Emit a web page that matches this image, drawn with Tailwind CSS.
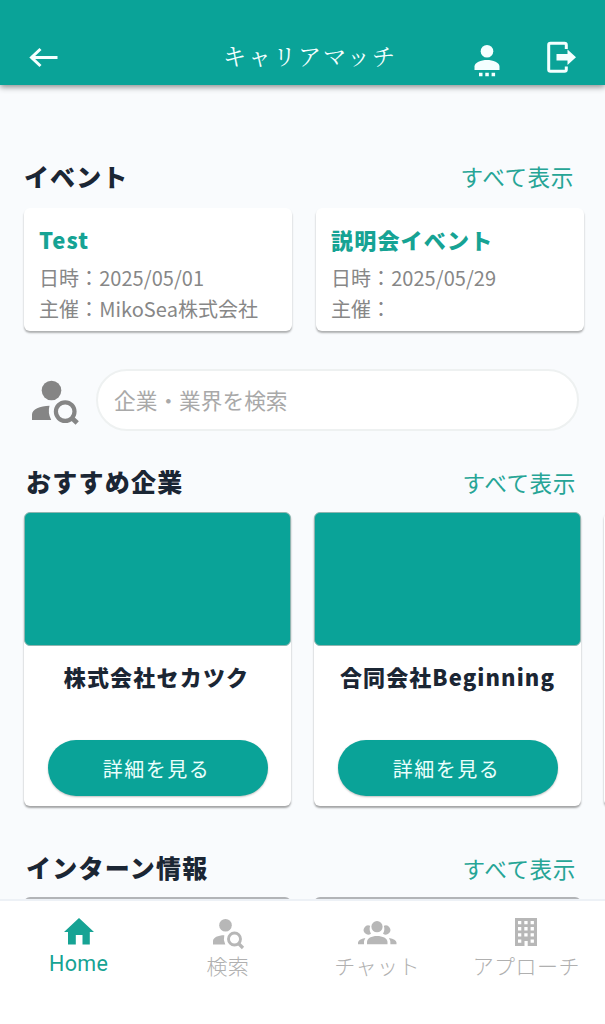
<!DOCTYPE html>
<html lang="ja">
<head>
    <meta charset="UTF-8">
    <meta name="viewport" content="width=device-width, initial-scale=1.0">
    <title>キャリアマッチ</title>
    <script src="https://cdn.jsdelivr.net/npm/@tailwindcss/browser@4"></script>
</head>
<body class="w-[605px] h-[1024px] flex flex-col overflow-hidden bg-[#f9fbfd] font-['Noto_Sans_CJK_JP',sans-serif] text-[#1b2634]">

    <!-- Header -->
    <header class="relative z-10 h-[85px] shrink-0 bg-[#0aa398] shadow-[0_2px_6px_rgba(0,0,0,0.45)] flex items-start pl-[28px] pt-[36px] text-[#f4ffff]">
        <svg class="w-8 h-11 shrink-0" viewBox="0 0 32 44" fill="none" stroke="currentColor" stroke-width="3">
            <path d="M29.500 21.500H4M12.500 13L3.500 21.500L12.500 30"/>
        </svg>
        <h1 class="ml-[163px] w-[176px] h-10 shrink-0 leading-[40px] text-[23px] tracking-[2px] font-normal whitespace-nowrap font-['Noto_Serif_CJK_JP','Noto_Sans_CJK_JP',serif]">キャリアマッチ</h1>
        <svg class="ml-[72px] w-8 h-11 shrink-0" viewBox="0 0 32 44" fill="currentColor">
            <circle cx="16" cy="15.300" r="6.300"/>
            <path d="M3.500 34V30.500C3.500 26.500 10 24 16 24S28.500 26.500 28.500 30.500V34Z"/>
            <path d="M8 36.700h3.500v3.500H8zM14.300 36.700h3.500v3.500h-3.500zM20.600 36.700h3.500v3.500h-3.500z"/>
        </svg>
        <svg class="ml-[42px] w-9 h-11 shrink-0" viewBox="0 0 36 44" fill="none">
            <path d="M21.300 13V9Q21.300 7.200 19.500 7.200H5.500Q3.700 7.200 3.700 9V33.500Q3.700 35.300 5.500 35.300H19.500Q21.300 35.300 21.300 33.500V30.500" stroke="currentColor" stroke-width="3"/>
            <path d="M11.500 18H22.500V13.500L31 21.300L22.500 29V24.500H11.500Z" fill="currentColor"/>
        </svg>
    </header>

    <!-- Contenido -->
    <main class="flex-1 min-h-0 overflow-hidden pl-[24px] pt-[73px]">
        <section>
            <div class="flex justify-between h-9 leading-9 pr-[31px]">
                <h2 class="text-[25px] font-black tracking-[1.100px]">イベント</h2>
                <a href="#" class="pt-px text-[22.600px] tracking-[0.600px] text-[#26a596]">すべて表示</a>
            </div>
            <div class="flex gap-6 mt-[14px]">
                <div class="w-[268px] h-[123px] shrink-0 bg-white rounded-md shadow-[0_2px_2px_rgba(0,0,0,0.3)] pl-[15px] pt-[15px]">
                    <h3 class="h-8 leading-8 text-[22px] font-black tracking-[1.100px] text-[#16a394]">Test</h3>
                    <p class="mt-[7px] h-[31px] leading-[31px] text-[20px] tracking-[0.050px] text-[#878787]">日時：2025/05/01</p>
                    <p class="h-[31px] leading-[31px] text-[20px] tracking-[0.050px] text-[#878787]">主催：MikoSea株式会社</p>
                </div>
                <div class="w-[268px] h-[123px] shrink-0 bg-white rounded-md shadow-[0_2px_2px_rgba(0,0,0,0.3)] pl-[15px] pt-[15px]">
                    <h3 class="h-8 leading-8 text-[22px] font-black tracking-[1.200px] text-[#16a394]">説明会イベント</h3>
                    <p class="mt-[7px] h-[31px] leading-[31px] text-[20px] tracking-[0.050px] text-[#878787]">日時：2025/05/29</p>
                    <p class="h-[31px] leading-[31px] text-[20px] tracking-[0.050px] text-[#878787]">主催：</p>
                </div>
            </div>
        </section>

        <!-- Buscador -->
        <div class="flex items-center mt-[37px] h-[63px]">
            <svg class="w-[60px] h-[60px]" viewBox="0 0 60 60">
                <g fill="#858585">
                    <circle cx="27.500" cy="20.500" r="9.800"/>
                    <path d="M8 50V44.500C8 39.500 16 35.800 25.500 35.800Q23.500 43 27.200 50Z"/>
                </g>
                <circle cx="41.200" cy="41.600" r="9.300" fill="none" stroke="#858585" stroke-width="4.200"/>
                <path d="M47 47.300L53.200 53" stroke="#858585" stroke-width="4.800"/>
            </svg>
            <input type="text" placeholder="企業・業界を検索" class="ml-[12px] w-[483px] h-[62px] rounded-full border-2 border-[#eef1f1] bg-white pl-4 text-[21.700px] placeholder:text-[#a9a9a9]">
        </div>

        <section class="mt-[32px]">
            <div class="flex justify-between h-9 leading-9 pl-[2px] pr-[29px]">
                <h2 class="text-[25px] font-black tracking-[1.250px]">おすすめ企業</h2>
                <a href="#" class="pt-[2px] text-[22.600px] tracking-[0.600px] text-[#26a596]">すべて表示</a>
            </div>
            <div class="flex gap-[23px] mt-[13px]">
                <div class="w-[267px] h-[294px] shrink-0 bg-white rounded-md shadow-[0_2px_2px_rgba(0,0,0,0.35)] flex flex-col items-center">
                    <div class="w-full h-[134px] rounded-md border-[1.500px] border-[#8fb5b0] bg-[#0aa398]"></div>
                    <h3 class="mt-[12px] h-9 leading-9 pr-[2px] text-[22px] font-black tracking-[1.200px]">株式会社セカツク</h3>
                    <button class="mt-[46px] w-[220px] h-[56px] pt-[2px] pr-[2px] rounded-full bg-[#0aa398] text-[#eafffc] text-[20px] tracking-[1.500px] shadow-[0_1px_2px_rgba(0,0,0,0.25)]">詳細を見る</button>
                </div>
                <div class="w-[267px] h-[294px] shrink-0 bg-white rounded-md shadow-[0_2px_2px_rgba(0,0,0,0.35)] flex flex-col items-center">
                    <div class="w-full h-[134px] rounded-md border-[1.500px] border-[#8fb5b0] bg-[#0aa398]"></div>
                    <h3 class="mt-[12px] h-9 leading-9 text-[22px] font-black tracking-[1.100px]">合同会社Beginning</h3>
                    <button class="mt-[46px] w-[220px] h-[56px] pt-[2px] pr-[2px] rounded-full bg-[#0aa398] text-[#eafffc] text-[20px] tracking-[1.500px] shadow-[0_1px_2px_rgba(0,0,0,0.25)]">詳細を見る</button>
                </div>
                <div class="w-[267px] h-[294px] shrink-0 bg-white rounded-md shadow-[0_2px_2px_rgba(0,0,0,0.35)]"></div>
            </div>
        </section>

        <section class="mt-[43px]">
            <div class="flex justify-between h-9 leading-9 pl-[2px] pr-[29px]">
                <h2 class="text-[25px] font-black tracking-[1.250px]">インターン情報</h2>
                <a href="#" class="pt-[2px] text-[22.600px] tracking-[0.600px] text-[#26a596]">すべて表示</a>
            </div>
            <div class="flex gap-[23px] mt-[12px]">
                <div class="w-[267px] h-[134px] shrink-0 rounded-md border-2 border-[#b2b4b7] bg-white"></div>
                <div class="w-[267px] h-[134px] shrink-0 rounded-md border-2 border-[#b2b4b7] bg-white"></div>
            </div>
        </section>
    </main>

    <!-- Menú inferior -->
    <nav class="h-[125px] shrink-0 bg-white border-t-2 border-[#edf1f6] pl-[4px] pr-[4px] grid grid-cols-4 text-[#b0b0b0] text-[21px] tracking-[0.500px] font-light text-center">
        <a href="#" class="flex flex-col items-center pt-[13px] text-[#16a394]">
            <svg class="w-10 h-9" viewBox="0 0 40 36" fill="currentColor">
                <path d="M20 4L35 18H30.800V30.500H23.500V21H16.800V30.500H9V18H5Z"/>
            </svg>
            <span class="h-7 leading-7 text-[21.500px] tracking-[0.300px] font-normal font-['Roboto',sans-serif]">Home</span>
        </a>
        <a href="#" class="flex flex-col items-center pt-[13px]">
            <svg class="w-10 h-9 text-[#b7b7b7]" viewBox="0 0 40 36">
                <g fill="currentColor">
                    <circle cx="17.500" cy="11.300" r="6.300"/>
                    <path d="M5 30.500V27C5 23.700 10 21.300 16.300 21.300Q15 26 17.300 30.500Z"/>
                </g>
                <circle cx="26.500" cy="25" r="6" fill="none" stroke="currentColor" stroke-width="2.900"/>
                <path d="M30.500 29.500L35 34" stroke="currentColor" stroke-width="3.200"/>
            </svg>
            <span class="h-8 leading-[31px]">検索</span>
        </a>
        <a href="#" class="flex flex-col items-center pt-[13px]">
            <svg class="w-10 h-9 text-[#b7b7b7]" viewBox="0 0 40 36" fill="currentColor">
                <circle cx="20" cy="12.700" r="5.600"/>
                <path d="M10 30.300V28C10 24.300 14.500 22 20 22S30.500 24.300 30.500 28V30.300Z"/>
                <path d="M13.200 11.800A4.600 4.600 0 1 0 14 19.700Q11.800 16 13.200 11.800ZM26.800 11.800A4.600 4.600 0 1 1 26 19.700Q28.200 16 26.800 11.800Z"/>
                <path d="M1 30.300V28.500Q1.500 25 8.300 24Q6.800 26 7 30.300ZM39.500 30.300V28.500Q39 25 32 24Q33.500 26 33.400 30.300Z"/>
            </svg>
            <span class="h-8 leading-[31px]">チャット</span>
        </a>
        <a href="#" class="flex flex-col items-center pt-[13px]">
            <svg class="w-10 h-9 text-[#b7b7b7]" viewBox="0 0 40 36">
                <path d="M9 4H31V32H9Z" fill="currentColor"/>
                <path fill="#fff" d="M12 7h3.300v3.300H12zM18.300 7h3.300v3.300h-3.300zM24.600 7h3.300v3.300h-3.300zM12 13.100h3.300v3.300H12zM18.300 13.100h3.300v3.300h-3.300zM24.600 13.100h3.300v3.300h-3.300zM12 19.200h3.300v3.300H12zM18.300 19.200h3.300v3.300h-3.300zM24.600 19.200h3.300v3.300h-3.300zM12 25.500h3.300v3.300H12zM24.600 25.500h3.300v3.300h-3.300zM18.500 27h3.200v5h-3.200z"/>
            </svg>
            <span class="h-8 leading-[31px]">アプローチ</span>
        </a>
    </nav>
</body>
</html>
